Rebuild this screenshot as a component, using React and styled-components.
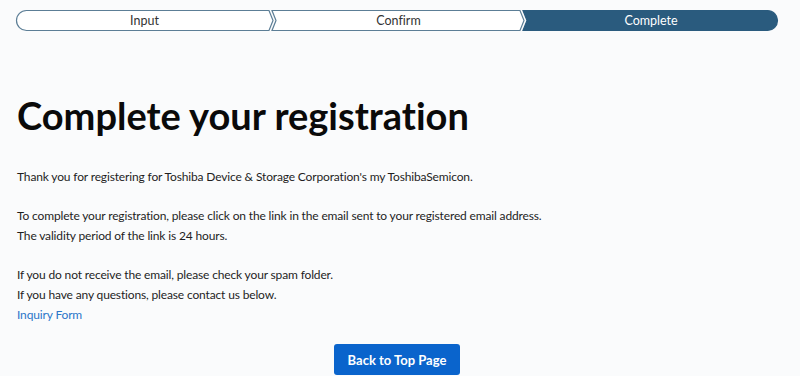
import React from "react";
import styled, { createGlobalStyle } from "styled-components";

const Global = createGlobalStyle`
  html, body { margin: 0; padding: 0; background: #fafbfc; }
  body {
    font-family: "Lato", "Noto Sans", sans-serif;
    color: #1e1e1e;
    font-variant-ligatures: none;
  }
`;

const Page = styled.div`
  width: 762px;
  padding: 10px 0 0 16px;
  box-sizing: content-box;
`;

const Stepper = styled.ol`
  display: flex;
  margin: 0;
  padding: 0;
  list-style: none;
  height: 21px;
`;

const Step = styled.li`
  position: relative;
  flex: 0 0 ${(p) => p.$w}px;
  height: 21px;
  display: flex;
  align-items: center;
  justify-content: center;
  padding-top: 1px;
  box-sizing: border-box;
  font-size: 12.5px;
  color: ${(p) => (p.$active ? "#ffffff" : "#333333")};
  svg { position: absolute; inset: 0; overflow: visible; }
  span { position: relative; line-height: 1; }
`;

const Heading = styled.h1`
  margin: 62px 0 0 1px;
  font-size: 38px;
  font-weight: 700;
  line-height: 44px;
  color: #0a0a0a;
  letter-spacing: 0;
`;

const Body = styled.div`
  margin: 30px 0 0 1px;
  font-size: 12px;
  letter-spacing: -0.15px;
  line-height: 20px;
`;

const Para = styled.p`
  margin: 0 0 19px;
  &:last-child { margin-bottom: 0; }
`;

const Link = styled.a`
  color: #2a76c9;
  text-decoration: none;
`;

const ButtonRow = styled.div`
  display: flex;
  justify-content: center;
  margin-top: 19px;
`;

const Button = styled.button`
  width: 126px;
  height: 31px;
  border: none;
  border-radius: 3px;
  background: #0a64cc;
  color: #fff;
  font-family: inherit;
  font-size: 13px;
  font-weight: 700;
`;

const stroke = "#5c7e96";
const fill = "#2a5b7e";

function StepShape({ w, kind, active }) {
  const h = 21;
  const t = 0.5;
  const b = h - 0.5;
  const m = h / 2;
  let d;
  if (kind === "first") {
    d = `M10.5 ${t} L${w - 4} ${t} L${w} ${m} L${w - 4} ${b} L10.5 ${b} A10 10 0 0 1 10.5 ${t} Z`;
  } else if (kind === "mid") {
    d = `M-1 ${t} L${w - 4} ${t} L${w} ${m} L${w - 4} ${b} L-1 ${b} L3 ${m} Z`;
  } else {
    d = `M-1 ${t} L${w - 10.5} ${t} A10 10 0 0 1 ${w - 10.5} ${b} L-1 ${b} L3 ${m} Z`;
  }
  return (
    <svg width={w} height={h} viewBox={`0 0 ${w} ${h}`}>
      <path
        d={d}
        fill={active ? fill : "#ffffff"}
        stroke={active ? fill : stroke}
        strokeWidth="1.2"
      />
    </svg>
  );
}

export default function App() {
  const steps = [
    { label: "Input", w: 257, kind: "first" },
    { label: "Confirm", w: 251, kind: "mid" },
    { label: "Complete", w: 254, kind: "last", active: true },
  ];
  return (
    <>
      <Global />
      <Page>
        <Stepper>
          {steps.map((s) => (
            <Step key={s.label} $w={s.w} $active={s.active}>
              <StepShape w={s.w} kind={s.kind} active={s.active} />
              <span>{s.label}</span>
            </Step>
          ))}
        </Stepper>
        <Heading>Complete your registration</Heading>
        <Body>
          <Para>
            Thank you for registering for Toshiba Device &amp; Storage Corporation's my ToshibaSemicon.
          </Para>
          <Para>
            To complete your registration, please click on the link in the email sent to your registered email address.
            <br />
            The validity period of the link is 24 hours.
          </Para>
          <Para>
            If you do not receive the email, please check your spam folder.
            <br />
            If you have any questions, please contact us below.
            <br />
            <Link href="#">Inquiry Form</Link>
          </Para>
        </Body>
        <ButtonRow>
          <Button>Back to Top Page</Button>
        </ButtonRow>
      </Page>
    </>
  );
}
